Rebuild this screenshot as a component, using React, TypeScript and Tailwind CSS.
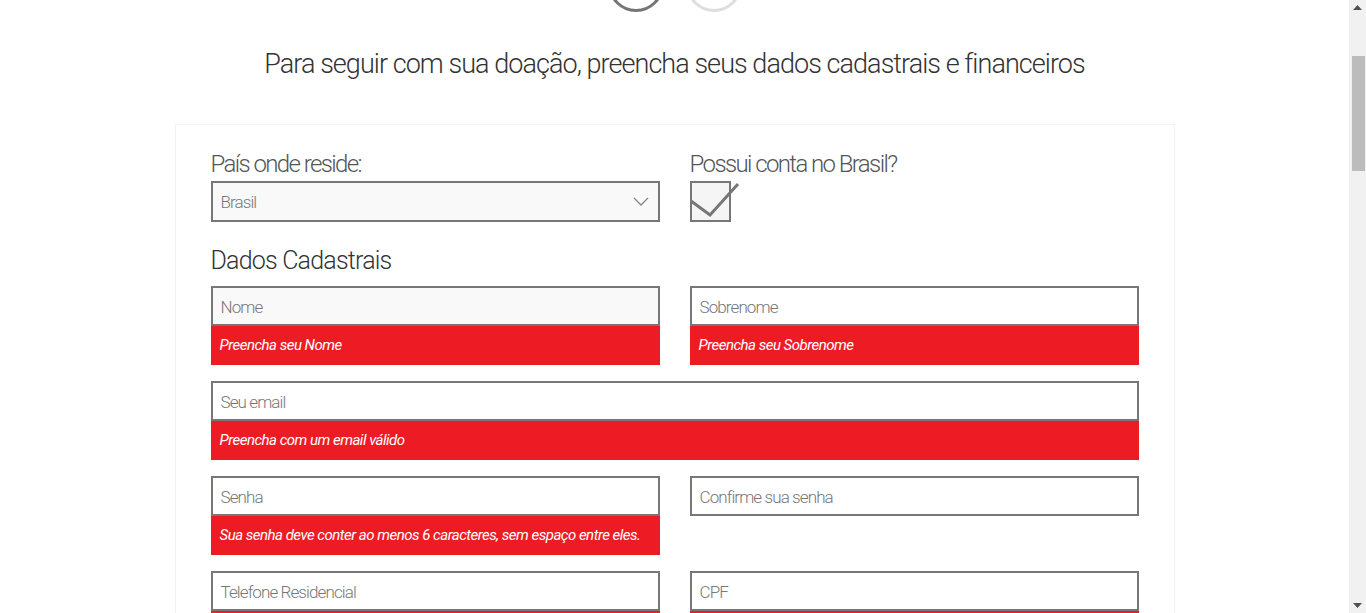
import React from 'react';

const font = { fontFamily: 'Roboto, "Liberation Sans", sans-serif' };

const Field: React.FC<{ placeholder: string; error?: string; filled?: boolean; cut?: boolean }> = ({ placeholder, error, filled, cut }) => (
    <div className="flex flex-col">
        <div className={`h-10 border-2 border-[#777] flex items-center px-2 pt-[3px] text-[17px] text-[#777] font-light tracking-[-0.9px] ${filled ? 'bg-[#f9f9f9]' : 'bg-white'}`}>
            {placeholder}
        </div>
        {error && (
            <div className="h-[39px] bg-[#ed1c24] flex items-center px-[9px] text-[15px] italic text-white tracking-[-0.5px] whitespace-nowrap">
                {error}
            </div>
        )}
        {cut && <div className="h-[3px] bg-[#ed1c24]" />}
    </div>
);

const App: React.FC = () => {
    return (
        <div className="h-[613px] w-[1366px] overflow-hidden flex bg-white" style={font}>
            <main className="flex-1 flex flex-col items-center">
                {/* Steps */}
                <div className="flex gap-[22px] -mt-[44px] ml-[-76px] pl-[76px]">
                    <div className="w-[56px] h-[56px] rounded-full border-[3px] border-[#757575]" />
                    <div className="w-[56px] h-[56px] rounded-full border-[3px] border-[#dedede]" />
                </div>

                <h1 className="mt-[37px] text-[27px] text-[#333] font-light tracking-[-0.95px] leading-[30px]">
                    Para seguir com sua doação, preencha seus dados cadastrais e financeiros
                </h1>

                <section className="mt-[45px] w-[1000px] border border-[#f2f2f2] px-[35px] pt-[23px]">
                    <div className="grid grid-cols-2 gap-x-[30px]">
                        <div>
                            <label className="block text-[24px] text-[#555] font-light tracking-[-1.6px] leading-[32px] mb-[1px]">País onde reside:</label>
                            <div className="h-[41px] border-2 border-[#777] bg-[#f9f9f9] flex items-center justify-between px-2 pt-[2px] text-[17px] text-[#777] font-light tracking-[-0.9px]">
                                <span>Brasil</span>
                                <svg width="16" height="10" viewBox="0 0 16 10" className="mr-[1px] -mt-[2px]">
                                    <path d="M1 1 L8 8 L15 1" fill="none" stroke="#888" strokeWidth="1.3" />
                                </svg>
                            </div>
                        </div>
                        <div>
                            <label className="block text-[24px] text-[#555] font-light tracking-[-1.6px] leading-[32px] mb-[1px]">Possui conta no Brasil?</label>
                            <div className="relative w-[41px] h-[41px] border-2 border-[#777] bg-[#f5f5f5]">
                                <svg width="52" height="44" viewBox="0 0 52 44" className="absolute -left-[2px] -top-[2px] overflow-visible">
                                    <path d="M1 20 L20 34 L48 3" fill="none" stroke="#777" strokeWidth="3" />
                                </svg>
                            </div>
                        </div>
                    </div>

                    <h2 className="mt-[23px] text-[25px] text-[#333] font-light tracking-[-0.8px] leading-[32px]">Dados Cadastrais</h2>

                    <div className="mt-[9px] grid grid-cols-2 gap-x-[30px] gap-y-4">
                        <Field placeholder="Nome" error="Preencha seu Nome" filled />
                        <Field placeholder="Sobrenome" error="Preencha seu Sobrenome" />
                        <div className="col-span-2">
                            <Field placeholder="Seu email" error="Preencha com um email válido" />
                        </div>
                        <Field placeholder="Senha" error="Sua senha deve conter ao menos 6 caracteres, sem espaço entre eles." />
                        <Field placeholder="Confirme sua senha" />
                        <Field placeholder="Telefone Residencial" cut />
                        <Field placeholder="CPF" cut />
                    </div>
                </section>
            </main>

            {/* Scrollbar */}
            <div className="w-[17px] bg-[#f1f1f1] flex flex-col items-center">
                <svg width="9" height="5" viewBox="0 0 9 5" className="mt-[5px]">
                    <path d="M0 5 L4.5 0 L9 5 Z" fill="#505050" />
                </svg>
                <div className="mt-[46px] w-[13px] h-[115px] bg-[#bcbcbc] ml-[1px]" />
                <div className="flex-1" />
                <svg width="9" height="5" viewBox="0 0 9 5" className="mb-[5px]">
                    <path d="M0 0 L4.5 5 L9 0 Z" fill="#505050" />
                </svg>
            </div>
        </div>
    );
};

export default App;
